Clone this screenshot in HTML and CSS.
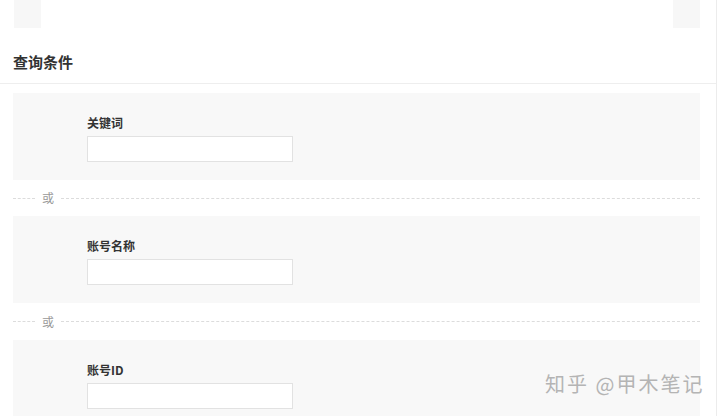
FILE: index.html
```html
<!DOCTYPE html>
<html lang="zh">
<head>
<meta charset="utf-8">
<link rel="stylesheet" href="styles.css">
</head>
<body>
<div class="page">
  <div class="top">
    <div class="stub"></div>
    <div class="stub"></div>
  </div>
  <div class="header"><h2 class="title">查询条件</h2></div>
  <div class="form">
    <div class="panel">
      <div class="label">关键词</div>
      <div class="input"></div>
    </div>
    <div class="or"><span class="dash short"></span><span class="or-text">或</span><span class="dash long"></span></div>
    <div class="panel">
      <div class="label">账号名称</div>
      <div class="input"></div>
    </div>
    <div class="or or-tall"><span class="dash short"></span><span class="or-text">或</span><span class="dash long"></span></div>
    <div class="panel">
      <div class="label">账号ID</div>
      <div class="input"></div>
    </div>
  </div>
  <div class="watermark">知乎 @甲木笔记</div>
</div>
</body>
</html>
```

FILE: styles.css
```css
html, body {
  margin: 0;
  padding: 0;
  background: #fff;
  font-family: "Noto Sans CJK SC", "Noto Sans", sans-serif;
  color: #333;
}
.page {
  position: relative;
  width: 716px;
  height: 416px;
  overflow: hidden;
  border-right: 1px solid #ececec;
}
.top {
  height: 28px;
  display: flex;
  justify-content: space-between;
  padding: 0 16px 0 14px;
}
.stub {
  width: 27px;
  height: 28px;
  background: #f7f7f7;
}
.header {
  height: 55px;
  border-bottom: 1px solid #eeeeee;
  display: flex;
  align-items: center;
  padding-left: 13px;
}
.title {
  margin: 12px 0 0;
  font-size: 15px;
  font-weight: 700;
  color: #333;
  line-height: 20px;
}
.form {
  padding: 9px 16px 0 13px;
}
.panel {
  height: 87px;
  box-sizing: border-box;
  background: #f8f8f8;
  padding: 21px 0 0 74px;
}
.label {
  font-size: 12px;
  font-weight: 700;
  line-height: 17px;
  color: #333;
  margin-bottom: 5px;
}
.input {
  width: 206px;
  height: 26px;
  box-sizing: border-box;
  background: #fff;
  border: 1px solid #e2e2e2;
}
.or {
  height: 36px;
  display: flex;
  align-items: center;
}
.or-tall {
  height: 37px;
}
.dash {
  height: 0;
  border-top: 1px dashed #dcdcdc;
}
.dash.short { width: 22px; }
.dash.long { flex: 1; }
.or-text {
  font-size: 12px;
  color: #999;
  width: 26px;
  text-align: center;
  line-height: 16px;
}
.watermark {
  position: absolute;
  left: 545px;
  top: 372px;
  font-size: 20px;
  line-height: 24px;
  color: #b4b4b4;
  letter-spacing: 2px;
  white-space: nowrap;
}
```
